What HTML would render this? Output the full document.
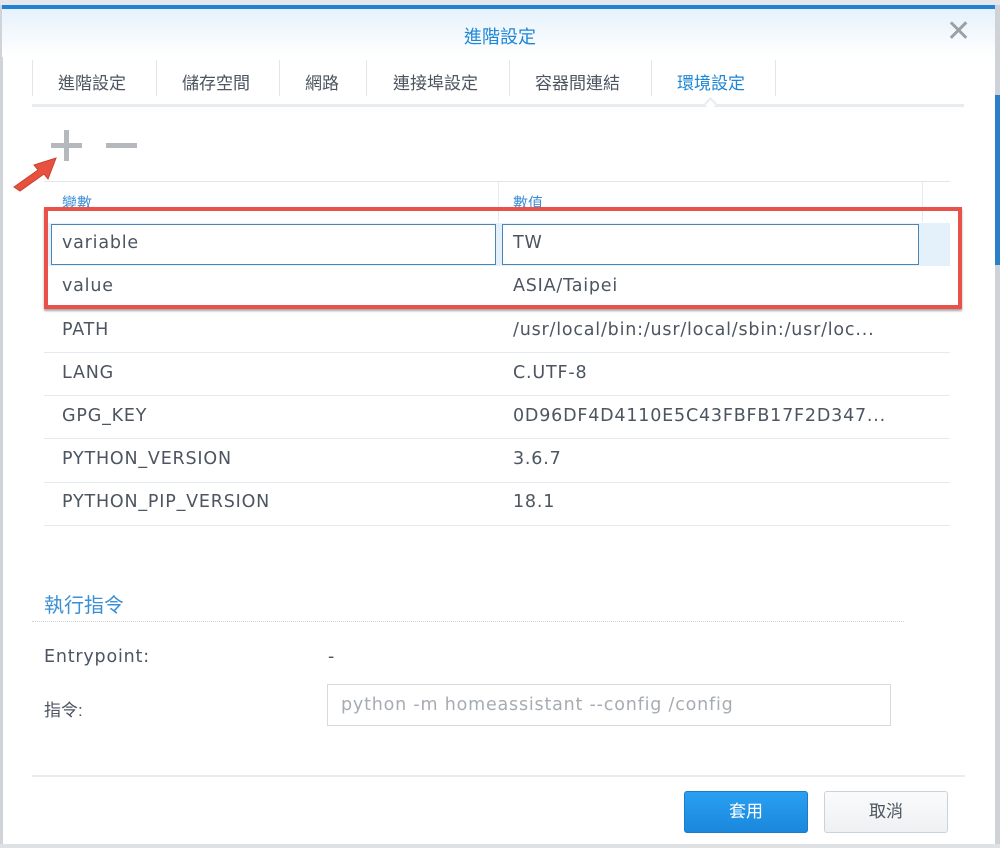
<!DOCTYPE html>
<html><head><meta charset="utf-8"><style>
*{margin:0;padding:0;box-sizing:border-box}
body{width:1000px;height:848px;position:relative;overflow:hidden;background:#fff;font-family:"Liberation Sans","Noto Sans CJK TC",sans-serif;color:#414b55}
.a{position:absolute;white-space:nowrap}
.t{font-size:17px;color:#4c5560}
.d{font-family:"DejaVu Sans","Noto Sans CJK TC",sans-serif;font-size:17.5px;letter-spacing:0.8px;color:#4c5560}
.row{position:absolute;left:44px;width:906px;height:1px;background:#e6eaee}
</style></head><body>
<div class="a" style="left:0;top:0;width:3px;height:848px;background:#d0d4d8"></div>
<div class="a" style="left:995px;top:0;width:5px;height:848px;background:#cfd3d7"></div>
<div class="a" style="left:995px;top:95px;width:5px;height:170px;background:#2a7fc8"></div>
<div class="a" style="left:0;top:0;width:1000px;height:5px;background:#e4e8ec"></div>
<div class="a" style="left:2px;top:5px;width:993px;height:4px;background:#1f82d4"></div>
<div class="a" style="left:2px;top:9px;width:993px;height:48px;background:linear-gradient(#e6f1fb,#fff)"></div>
<div class="a" style="left:0;top:23px;width:1000px;text-align:center;font-size:18px;color:#1d86d6">進階設定</div>
<div class="a" style="left:946px;top:17px;font-size:30px;color:#9aa0a6;line-height:30px">✕</div>
<div class="a" style="left:32px;top:104px;width:932px;height:3px;background:#e9ecef"></div>
<div class="a" style="left:32px;top:60px;width:1px;height:36px;background:#e3e6e9"></div>
<div class="a" style="left:156px;top:60px;width:1px;height:36px;background:#e3e6e9"></div>
<div class="a" style="left:279px;top:60px;width:1px;height:36px;background:#e3e6e9"></div>
<div class="a" style="left:366px;top:60px;width:1px;height:36px;background:#e3e6e9"></div>
<div class="a" style="left:509px;top:60px;width:1px;height:36px;background:#e3e6e9"></div>
<div class="a" style="left:651px;top:60px;width:1px;height:36px;background:#e3e6e9"></div>
<div class="a" style="left:775px;top:60px;width:1px;height:36px;background:#e3e6e9"></div>
<div class="a t" style="left:58px;top:69px">進階設定</div>
<div class="a t" style="left:182px;top:69px">儲存空間</div>
<div class="a t" style="left:305px;top:69px">網路</div>
<div class="a t" style="left:393px;top:69px">連接埠設定</div>
<div class="a t" style="left:535px;top:69px">容器間連結</div>
<div class="a t" style="left:677px;top:69px;color:#1d86d6">環境設定</div>
<div class="a" style="left:706px;top:99px;width:9px;height:9px;background:#fff;border-left:2px solid #e9ecef;border-top:2px solid #e9ecef;transform:rotate(45deg)"></div>
<div class="a" style="left:51px;top:143px;width:31px;height:5px;background:#b5b9bd"></div>
<div class="a" style="left:64px;top:130px;width:5px;height:31px;background:#b5b9bd"></div>
<div class="a" style="left:106px;top:143px;width:31px;height:5px;background:#b5b9bd"></div>
<svg class="a" style="left:8px;top:150px" width="55" height="45" viewBox="0 0 55 45"><path d="M6 37 L30 20 L26 15 L48 8 L40 29 L36 24 L12 41 Z" fill="#e8503f" stroke="#c8402f" stroke-width="1"/></svg>
<div class="a" style="left:44px;top:181px;width:906px;height:1px;background:#e3e6e9"></div>
<div class="a" style="left:498px;top:182px;width:1px;height:40px;background:#e6eaee"></div>
<div class="a" style="left:922px;top:182px;width:1px;height:40px;background:#e6eaee"></div>
<div class="a" style="left:62px;top:192px;font-size:15px;color:#3b8fd4">變數</div>
<div class="a" style="left:513px;top:192px;font-size:15px;color:#3b8fd4">數值</div>
<div class="a" style="left:44px;top:223px;width:906px;height:43px;background:#e4f0fa"></div>
<div class="a" style="left:51px;top:224px;width:445px;height:41px;background:#fff;border:1px solid #4a86b5"></div>
<div class="a" style="left:502px;top:224px;width:417px;height:41px;background:#fff;border:1px solid #4a86b5"></div>
<div class="a d" style="left:62px;top:233px">variable</div>
<div class="a d" style="left:513px;top:233px">TW</div>
<div class="a d" style="left:62px;top:276px">value</div>
<div class="a d" style="left:513px;top:276px">ASIA/Taipei</div>
<div class="a" style="left:44px;top:207px;width:918px;height:102px;border:4px solid #e9524a;box-shadow:0 2px 2px rgba(0,0,0,.35)"></div>
<div class="row" style="top:352px"></div>
<div class="row" style="top:395px"></div>
<div class="row" style="top:438px"></div>
<div class="row" style="top:482px"></div>
<div class="row" style="top:525px"></div>
<div class="a d" style="left:62px;top:320px">PATH</div>
<div class="a d" style="left:513px;top:320px">/usr/local/bin:/usr/local/sbin:/usr/loc...</div>
<div class="a d" style="left:62px;top:363px">LANG</div>
<div class="a d" style="left:513px;top:363px">C.UTF-8</div>
<div class="a d" style="left:62px;top:406px">GPG_KEY</div>
<div class="a d" style="left:513px;top:406px">0D96DF4D4110E5C43FBFB17F2D347...</div>
<div class="a d" style="left:62px;top:449px">PYTHON_VERSION</div>
<div class="a d" style="left:513px;top:449px">3.6.7</div>
<div class="a d" style="left:62px;top:492px">PYTHON_PIP_VERSION</div>
<div class="a d" style="left:513px;top:492px">18.1</div>
<div class="a" style="left:44px;top:589px;font-size:20px;color:#3b8fd4">執行指令</div>
<div class="a" style="left:32px;top:621px;width:872px;height:0;border-top:1px dotted #cfd4d9"></div>
<div class="a d" style="left:44px;top:647px">Entrypoint:</div>
<div class="a d" style="left:328px;top:647px">-</div>
<div class="a t" style="left:44px;top:696px">指令:</div>
<div class="a" style="left:327px;top:684px;width:564px;height:42px;border:1px solid #d5dade;background:#fff"></div>
<div class="a d" style="left:341px;top:695px;color:#a6acb2">python -m homeassistant --config /config</div>
<div class="a" style="left:32px;top:775px;width:933px;height:2px;background:#e9ecef"></div>
<div class="a" style="left:684px;top:791px;width:124px;height:42px;border-radius:3px;background:linear-gradient(#2aa0f2,#1a87dc);border:1px solid #1a7dca;color:#fff;font-size:17px;text-align:center;line-height:40px">套用</div>
<div class="a" style="left:824px;top:791px;width:124px;height:42px;border-radius:3px;background:linear-gradient(#fafbfc,#eef0f2);border:1px solid #cdd2d7;color:#4c5560;font-size:17px;text-align:center;line-height:40px">取消</div>
<div class="a" style="left:0;top:844px;width:1000px;height:4px;background:#dfe2e5"></div>
</body></html>
